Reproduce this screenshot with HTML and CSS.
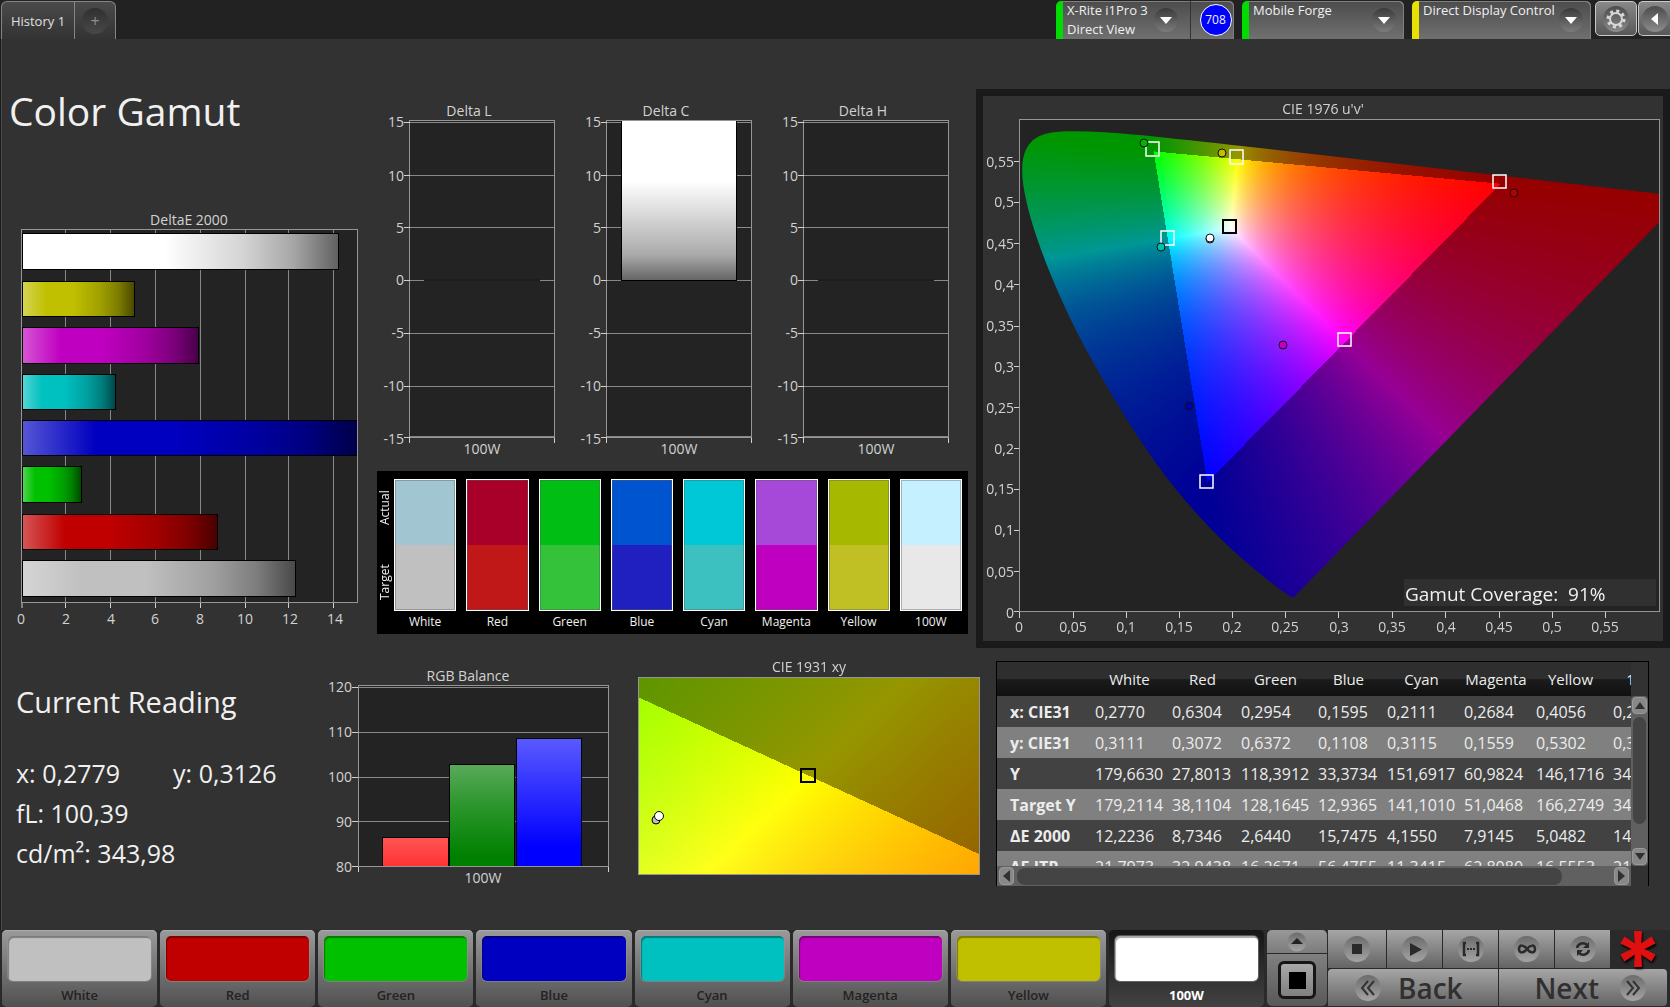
FILE: index.html
```html
<!DOCTYPE html>
<html lang="en">
<head>
<meta charset="utf-8">
<title>Color Gamut</title>
<link rel="stylesheet" href="styles.css">
</head>
<body>
<header class="topbar">
  <nav class="tabs">
    <a class="tab" href="#history">History 1</a>
    <button class="tab tab-add" type="button" aria-label="Add tab"><span>+</span></button>
  </nav>
  <div class="devices">
    <div class="device device-meter ok">
      <button class="device-main" type="button"><span class="device-name">X-Rite i1Pro 3<br>Direct View</span><span class="drop"></span></button>
      <span class="badge-cell"><span class="badge">708</span></span>
    </div>
    <div class="device device-source ok">
      <button class="device-main" type="button"><span class="device-name">Mobile Forge</span><span class="drop"></span></button>
    </div>
    <div class="device device-display warn">
      <button class="device-main" type="button"><span class="device-name">Direct Display Control</span><span class="drop"></span></button>
    </div>
    <button class="tool" type="button" aria-label="Settings">
      <svg width="32" height="32" viewBox="0 0 32 32"><circle cx="16" cy="16" r="13" fill="url(#disc)"/><circle cx="16" cy="16" r="6" fill="none" stroke="#d8d8d8" stroke-width="2"/><circle cx="16" cy="16" r="8" fill="none" stroke="#d8d8d8" stroke-width="3" stroke-dasharray="3 3.283"/></svg>
    </button>
    <button class="tool tool-last" type="button" aria-label="Collapse">
      <svg width="32" height="32" viewBox="0 0 32 32"><circle cx="16" cy="16" r="13" fill="url(#disc)"/><path d="M19 10v12l-7-6z" fill="#fff"/></svg>
    </button>
  </div>
</header>

<svg class="defs" width="0" height="0" aria-hidden="true">
  <defs>
    <linearGradient id="disc" x1="0" y1="0" x2="0" y2="1"><stop offset="0" stop-color="#4c4c4c"/><stop offset="1" stop-color="#8c8c8c"/></linearGradient>
    <linearGradient id="discLight" x1="0" y1="0" x2="0" y2="1"><stop offset="0" stop-color="#6c6c6c"/><stop offset="1" stop-color="#a4a4a4"/></linearGradient>
    <linearGradient id="shade" x1="0" y1="0" x2="1" y2="0">
      <stop offset="0" stop-color="#fff" stop-opacity=".34"/><stop offset=".22" stop-color="#fff" stop-opacity="0"/>
      <stop offset=".45" stop-color="#000" stop-opacity="0"/><stop offset=".7" stop-color="#000" stop-opacity=".17"/>
      <stop offset=".86" stop-color="#000" stop-opacity=".35"/><stop offset="1" stop-color="#000" stop-opacity=".62"/>
    </linearGradient>
    <linearGradient id="fall" x1="0" y1="0" x2="0" y2="1">
      <stop offset="0" stop-color="#fff"/><stop offset=".38" stop-color="#fff"/><stop offset=".84" stop-color="#aaa"/><stop offset="1" stop-color="#646464"/>
    </linearGradient>
    <linearGradient id="gr" x1="0" y1="0" x2="0" y2="1"><stop offset="0" stop-color="#f55"/><stop offset="1" stop-color="#f33"/></linearGradient>
    <linearGradient id="gg" x1="0" y1="0" x2="0" y2="1"><stop offset="0" stop-color="#5aaa5a"/><stop offset=".4" stop-color="#2c962c"/><stop offset=".9" stop-color="#008000"/></linearGradient>
    <linearGradient id="gb" x1="0" y1="0" x2="0" y2="1"><stop offset="0" stop-color="#5a5aff"/><stop offset=".45" stop-color="#2a2aff"/><stop offset=".85" stop-color="#0000ff"/></linearGradient>
  </defs>
</svg>

<main>
  <div class="upper">
    <section class="col-left">
      <h1>Color Gamut</h1>
      <svg class="chart" viewBox="0 210 370 425" role="img" aria-label="DeltaE 2000">
        <text x="189" y="226" class="mid">DeltaE 2000</text>
        <rect x="22" y="230" width="335" height="373" fill="#232323"/>
        <path class="grid" d="M65.500 231V603M110.500 231V603M155.500 231V603M200.500 231V603M245.500 231V603M288.500 231V603M333.500 231V603"/>
        <g class="bars">
          <rect x="22" y="234" width="316" height="36" fill="#fff"/><rect x="22" y="234" width="316" height="36" fill="url(#shade)"/>
          <rect x="22" y="282" width="112" height="35" fill="#c0c000"/><rect x="22" y="282" width="112" height="35" fill="url(#shade)"/>
          <rect x="22" y="328" width="176" height="36" fill="#c000c0"/><rect x="22" y="328" width="176" height="36" fill="url(#shade)"/>
          <rect x="22" y="375" width="93" height="35" fill="#00c0c0"/><rect x="22" y="375" width="93" height="35" fill="url(#shade)"/>
          <rect x="22" y="421" width="335" height="35" fill="#0000c0"/><rect x="22" y="421" width="335" height="35" fill="url(#shade)"/>
          <rect x="22" y="467" width="59" height="36" fill="#00c000"/><rect x="22" y="467" width="59" height="36" fill="url(#shade)"/>
          <rect x="22" y="515" width="195" height="35" fill="#c00000"/><rect x="22" y="515" width="195" height="35" fill="url(#shade)"/>
          <rect x="22" y="561" width="273" height="36" fill="#c0c0c0"/><rect x="22" y="561" width="273" height="36" fill="url(#shade)"/>
        </g>
        <rect x="21.500" y="230.500" width="336" height="373" class="frame"/>
        <path class="tick" d="M22 604v5M65.500 604v5M110.500 604v5M155.500 604v5M200.500 604v5M245.500 604v5M288.500 604v5M333.500 604v5"/>
        <g class="mid"><text x="21" y="625">0</text><text x="66" y="625">2</text><text x="111" y="625">4</text><text x="155" y="625">6</text><text x="200" y="625">8</text><text x="245" y="625">10</text><text x="290" y="625">12</text><text x="335" y="625">14</text></g>
      </svg>
    </section>

    <section class="col-mid">
      <div class="deltas">
        <svg class="chart" viewBox="0 0 197 360" role="img" aria-label="Delta L">
          <text x="92" y="17" class="mid">Delta L</text>
          <rect x="33" y="22" width="144" height="317" fill="#232323"/>
          <path class="grid" d="M33 23.500H177M33 76.500H177M33 128.500H177M33 181.500H47M163 181.500H177M33 234.500H177M33 287.500H177M33 337.500H177"/>
          <path d="M47 181H163" stroke="#181818"/>
          <rect x="32.500" y="21.500" width="145" height="317" class="frame"/>
          <path class="tick" d="M27 23.500h6M27 76.500h6M27 128.500h6M27 181.500h6M27 234.500h6M27 287.500h6M27 338.500h6M32.500 339v5M177.500 339v5"/>
          <g class="end"><text x="27" y="28">15</text><text x="27" y="82">10</text><text x="27" y="134">5</text><text x="27" y="186">0</text><text x="27" y="239">-5</text><text x="27" y="292">-10</text><text x="27" y="345">-15</text></g>
          <text x="105" y="355" class="mid">100W</text>
        </svg>
        <svg class="chart" viewBox="0 0 197 360" role="img" aria-label="Delta C">
          <text x="92" y="17" class="mid">Delta C</text>
          <rect x="33" y="22" width="144" height="317" fill="#232323"/>
          <path class="grid" d="M33 23.500H177M33 76.500H177M33 128.500H177M33 181.500H177M33 234.500H177M33 287.500H177M33 337.500H177"/>
          <rect x="47.500" y="21.500" width="115" height="160" fill="url(#fall)" stroke="#000"/>
          <rect x="32.500" y="21.500" width="145" height="317" class="frame"/>
          <path class="tick" d="M27 23.500h6M27 76.500h6M27 128.500h6M27 181.500h6M27 234.500h6M27 287.500h6M27 338.500h6M32.500 339v5M177.500 339v5"/>
          <g class="end"><text x="27" y="28">15</text><text x="27" y="82">10</text><text x="27" y="134">5</text><text x="27" y="186">0</text><text x="27" y="239">-5</text><text x="27" y="292">-10</text><text x="27" y="345">-15</text></g>
          <text x="105" y="355" class="mid">100W</text>
        </svg>
        <svg class="chart" viewBox="0 0 197 360" role="img" aria-label="Delta H">
          <text x="92" y="17" class="mid">Delta H</text>
          <rect x="33" y="22" width="144" height="317" fill="#232323"/>
          <path class="grid" d="M33 23.500H177M33 76.500H177M33 128.500H177M33 181.500H47M163 181.500H177M33 234.500H177M33 287.500H177M33 337.500H177"/>
          <path d="M47 181H163" stroke="#181818"/>
          <rect x="32.500" y="21.500" width="145" height="317" class="frame"/>
          <path class="tick" d="M27 23.500h6M27 76.500h6M27 128.500h6M27 181.500h6M27 234.500h6M27 287.500h6M27 338.500h6M32.500 339v5M177.500 339v5"/>
          <g class="end"><text x="27" y="28">15</text><text x="27" y="82">10</text><text x="27" y="134">5</text><text x="27" y="186">0</text><text x="27" y="239">-5</text><text x="27" y="292">-10</text><text x="27" y="345">-15</text></g>
          <text x="105" y="355" class="mid">100W</text>
        </svg>
      </div>
      <div class="compare">
        <div class="compare-side"><span>Actual</span><span>Target</span></div>
        <div class="pair"><div class="chips chips-white"></div>White</div>
        <div class="pair"><div class="chips chips-red"></div>Red</div>
        <div class="pair"><div class="chips chips-green"></div>Green</div>
        <div class="pair"><div class="chips chips-blue"></div>Blue</div>
        <div class="pair"><div class="chips chips-cyan"></div>Cyan</div>
        <div class="pair"><div class="chips chips-magenta"></div>Magenta</div>
        <div class="pair"><div class="chips chips-yellow"></div>Yellow</div>
        <div class="pair"><div class="chips chips-100w"></div>100W</div>
      </div>
    </section>

    <section class="gamut stack">
      <canvas id="uv" width="680" height="545"></canvas>
      <svg class="chart" viewBox="983 97 680 545" role="img" aria-label="CIE 1976 u'v'">
        <text x="1323" y="115" class="mid">CIE 1976 u'v'</text>
        <rect x="1019.500" y="120.500" width="640" height="492" class="frame"/>
        <path class="tick" d="M1019.500 613v6M1073.500 613v6M1126.500 613v6M1179.500 613v6M1232.500 613v6M1285.500 613v6M1338.500 613v6M1392.500 613v6M1445.500 613v6M1499.500 613v6M1552.500 613v6M1605.500 613v6M1014 612.500h5M1014 572.500h5M1014 531.500h5M1014 490.500h5M1014 449.500h5M1014 408.500h5M1014 367.500h5M1014 327.500h5M1014 285.500h5M1014 244.500h5M1014 203.500h5M1014 162.500h5"/>
        <g class="mid"><text x="1019" y="633">0</text><text x="1073" y="633">0,05</text><text x="1126" y="633">0,1</text><text x="1179" y="633">0,15</text><text x="1232" y="633">0,2</text><text x="1285" y="633">0,25</text><text x="1339" y="633">0,3</text><text x="1392" y="633">0,35</text><text x="1446" y="633">0,4</text><text x="1499" y="633">0,45</text><text x="1552" y="633">0,5</text><text x="1605" y="633">0,55</text></g>
        <g class="end"><text x="1014" y="619">0</text><text x="1014" y="578">0,05</text><text x="1014" y="536">0,1</text><text x="1014" y="495">0,15</text><text x="1014" y="455">0,2</text><text x="1014" y="414">0,25</text><text x="1014" y="373">0,3</text><text x="1014" y="332">0,35</text><text x="1014" y="291">0,4</text><text x="1014" y="250">0,45</text><text x="1014" y="208">0,5</text><text x="1014" y="168">0,55</text></g>
        <g fill="none" stroke="#fff" stroke-width="1.500">
          <rect x="1146" y="143" width="13" height="14"/><rect x="1230" y="151" width="13" height="14"/><rect x="1493" y="176" width="13" height="13"/><rect x="1161" y="232" width="13" height="14"/><rect x="1338" y="334" width="13" height="13"/><rect x="1200" y="476" width="13" height="13"/>
          <rect x="1223" y="221" width="13" height="13" stroke="#000" stroke-width="2"/>
        </g>
        <g stroke="#111" stroke-width="1">
          <circle cx="1144" cy="144" r="4" fill="#00b400"/><circle cx="1222" cy="154" r="4" fill="#c0c000"/><circle cx="1514" cy="194" r="4" fill="#b80000"/><circle cx="1161" cy="248" r="4" fill="#00c0b0"/><circle cx="1283" cy="346" r="4" fill="#c000c0"/><circle cx="1189" cy="407" r="4" fill="#0000b0"/><circle cx="1210" cy="240" r="4" fill="#c0c0c0"/><circle cx="1210" cy="239" r="4" fill="#fff"/>
        </g>
        <rect x="1404" y="580" width="252" height="27" fill="#303030"/>
        <text x="1405" y="602" class="coverage">Gamut Coverage:&#160; 91%</text>
      </svg>
    </section>
  </div>

  <div class="lower">
    <section class="reading">
      <h2>Current Reading</h2>
      <p class="xy"><span>x: 0,2779</span><span>y: 0,3126</span></p>
      <p>fL: 100,39</p>
      <p>cd/m²: 343,98</p>
    </section>
    <svg class="chart" viewBox="320 662 310 226" role="img" aria-label="RGB Balance">
      <text x="468" y="682" class="mid">RGB Balance</text>
      <rect x="359" y="687" width="249" height="181" fill="#232323"/>
      <path class="grid" d="M359 688.500H608M359 733.500H608M359 778.500H608M359 822.500H608"/>
      <g stroke="#000"><rect x="382.500" y="838.500" width="66" height="29" fill="url(#gr)"/><rect x="449.500" y="765.500" width="65" height="102" fill="url(#gg)"/><rect x="516.500" y="739.500" width="65" height="128" fill="url(#gb)"/></g>
      <rect x="358.500" y="686.500" width="250" height="181" class="frame"/>
      <path class="tick" d="M352 688.500h6M352 733.500h6M352 778.500h6M352 822.500h6M352 867.500h6M358.500 868v5M608.500 868v5"/>
      <g class="end"><text x="352" y="693">120</text><text x="352" y="738">110</text><text x="352" y="783">100</text><text x="352" y="828">90</text><text x="352" y="873">80</text></g>
      <text x="483" y="884" class="mid">100W</text>
    </svg>
    <div class="stack">
      <canvas id="xy" width="355" height="226"></canvas>
      <svg class="chart" viewBox="630 653 355 226" role="img" aria-label="CIE 1931 xy">
        <text x="809" y="673" class="mid">CIE 1931 xy</text>
        <rect x="638.500" y="678.500" width="341" height="197" class="frame"/>
        <rect x="801" y="770" width="14" height="13" fill="none" stroke="#000" stroke-width="2"/>
        <g stroke="#000"><circle cx="656" cy="821" r="4" fill="#c0c0c0"/><circle cx="659" cy="817" r="4.500" fill="#fff"/></g>
      </svg>
    </div>
    <section class="results">
      <div class="view">
        <table>
          <colgroup><col class="c-name"><col class="c-w"><col class="c-r"><col class="c-g"><col class="c-b"><col class="c-c"><col class="c-m"><col class="c-y"><col class="c-h"></colgroup>
          <thead><tr><td></td><th scope="col">White</th><th scope="col">Red</th><th scope="col">Green</th><th scope="col">Blue</th><th scope="col">Cyan</th><th scope="col">Magenta</th><th scope="col">Yellow</th><th scope="col">100W</th></tr></thead>
          <tbody>
            <tr><th scope="row">x: CIE31</th><td>0,2770</td><td>0,6304</td><td>0,2954</td><td>0,1595</td><td>0,2111</td><td>0,2684</td><td>0,4056</td><td>0,2779</td></tr>
            <tr><th scope="row">y: CIE31</th><td>0,3111</td><td>0,3072</td><td>0,6372</td><td>0,1108</td><td>0,3115</td><td>0,1559</td><td>0,5302</td><td>0,3126</td></tr>
            <tr><th scope="row">Y</th><td>179,6630</td><td>27,8013</td><td>118,3912</td><td>33,3734</td><td>151,6917</td><td>60,9824</td><td>146,1716</td><td>343,98</td></tr>
            <tr><th scope="row">Target Y</th><td>179,2114</td><td>38,1104</td><td>128,1645</td><td>12,9365</td><td>141,1010</td><td>51,0468</td><td>166,2749</td><td>343,98</td></tr>
            <tr><th scope="row">ΔE 2000</th><td>12,2236</td><td>8,7346</td><td>2,6440</td><td>15,7475</td><td>4,1550</td><td>7,9145</td><td>5,0482</td><td>14,17</td></tr>
            <tr><th scope="row">ΔE ITP</th><td>21,7973</td><td>32,9438</td><td>16,2671</td><td>56,4755</td><td>11,3415</td><td>62,8080</td><td>16,5553</td><td>21,45</td></tr>
          </tbody>
        </table>
      </div>
      <div class="vbar">
        <button type="button" aria-label="Scroll up"><svg width="10" height="8"><path d="M0 7L5 0L10 7z"/></svg></button>
        <span class="vthumb"></span>
        <button type="button" aria-label="Scroll down"><svg width="10" height="8"><path d="M0 0L5 7L10 0z"/></svg></button>
      </div>
      <div class="hbar">
        <button type="button" aria-label="Scroll left"><svg width="7" height="12"><path d="M7 0L0 6L7 12z"/></svg></button>
        <span class="hthumb"></span>
        <button type="button" aria-label="Scroll right"><svg width="7" height="12"><path d="M0 0L7 6L0 12z"/></svg></button>
      </div>
    </section>
  </div>
</main>

<footer class="dock">
  <div class="patches">
    <button class="patch" type="button"><span class="fill f-white"></span>White</button>
    <button class="patch" type="button"><span class="fill f-red"></span>Red</button>
    <button class="patch" type="button"><span class="fill f-green"></span>Green</button>
    <button class="patch" type="button"><span class="fill f-blue"></span>Blue</button>
    <button class="patch" type="button"><span class="fill f-cyan"></span>Cyan</button>
    <button class="patch" type="button"><span class="fill f-magenta"></span>Magenta</button>
    <button class="patch" type="button"><span class="fill f-yellow"></span>Yellow</button>
    <button class="patch active" type="button"><span class="fill f-100w"></span>100W</button>
  </div>
  <div class="window">
    <button class="window-up" type="button" aria-label="More"><svg width="20" height="20"><circle cx="10" cy="10" r="9.500" fill="url(#discLight)"/><path d="M4 12L10 6L16 12z" fill="#222"/></svg></button>
    <button class="window-full" type="button" aria-label="Pattern window"><span></span></button>
  </div>
  <div class="controls">
    <button type="button" aria-label="Stop"><svg width="28" height="28"><circle cx="14" cy="14" r="13" fill="url(#discLight)"/><path d="M9 9h10v10H9z" fill="#2a2a2a"/></svg></button>
    <button type="button" aria-label="Play"><svg width="28" height="28"><circle cx="14" cy="14" r="13" fill="url(#discLight)"/><path d="M9 8L21 14.500L9 21z" fill="#2a2a2a"/></svg></button>
    <button type="button" aria-label="Step"><svg width="28" height="28"><circle cx="14" cy="14" r="13" fill="url(#discLight)"/><path d="M9 8H7V20H9M19 8H21V20H19" fill="none" stroke="#2a2a2a" stroke-width="2.500"/><path d="M10 14h2M13 14h2M16 14h2" stroke="#2a2a2a" stroke-width="2"/></svg></button>
    <button type="button" aria-label="Continuous"><svg width="28" height="28"><circle cx="14" cy="14" r="13" fill="url(#discLight)"/><path d="M14 14C11 10 6 9 6 14S11 18 14 14S22 9 22 14S17 18 14 14z" fill="none" stroke="#2a2a2a" stroke-width="2.500"/></svg></button>
    <button type="button" aria-label="Repeat"><svg width="28" height="28"><circle cx="14" cy="14" r="13" fill="url(#discLight)"/><path d="M8 13C9 8 15 7 18 10M20 15C19 20 13 21 10 18" fill="none" stroke="#2a2a2a" stroke-width="2.500"/><path d="M20 7V13H14zM8 21V15H14z" fill="#2a2a2a"/></svg></button>
    <svg class="star" width="36" height="40" viewBox="-18 -20 36 40" aria-hidden="true"><g fill="#e01010"><path d="M-4 -18H4L3 0H-3z"/><path d="M-4 -18H4L3 0H-3z" transform="rotate(60)"/><path d="M-4 -18H4L3 0H-3z" transform="rotate(120)"/><path d="M-4 -18H4L3 0H-3z" transform="rotate(180)"/><path d="M-4 -18H4L3 0H-3z" transform="rotate(240)"/><path d="M-4 -18H4L3 0H-3z" transform="rotate(300)"/></g></svg>
    <button class="step back" type="button"><svg width="28" height="28"><circle cx="14" cy="14" r="13" fill="url(#discLight)"/><path d="M14 7L8 14L14 21M20 7L14 14L20 21" fill="none" stroke="#333" stroke-width="2"/></svg>Back</button>
    <button class="step next" type="button">Next<svg width="28" height="28"><circle cx="14" cy="14" r="13" fill="url(#discLight)"/><path d="M8 7L14 14L8 21M14 7L20 14L14 21" fill="none" stroke="#333" stroke-width="2"/></svg></button>
  </div>
</footer>
<script src="gamut.js"></script>
</body>
</html>
```
FILE: styles.css
```css
* { box-sizing: border-box; }
body {
  margin: 0;
  min-height: 100vh;
  display: flex;
  flex-direction: column;
  background: #323232;
  color: #f0f0f0;
  font: 14px/18px "Open Sans", "Noto Sans", sans-serif;
  overflow-x: hidden;
  box-shadow: inset 1px 0 #1c1c1c, inset 2px 0 #484848;
}
button { font: inherit; color: inherit; border: 0; padding: 0; margin: 0; background: none; }
h1, h2, p { margin: 0; font-weight: 400; }
svg { display: block; }
.defs { position: absolute; }

/* Top bar */
.topbar {
  height: 39px;
  background: #222;
  display: flex;
  justify-content: space-between;
  padding-top: 1px;
  padding-left: 1px;
}
.tabs {
  display: flex;
  border: 1px solid #858585;
  border-bottom: 0;
  border-radius: 6px 6px 0 0;
  background: linear-gradient(#4a4a4a, #333);
}
.tab { width: 72px; color: #e0e0e0; text-decoration: none; line-height: 39px; font-size: 13px; text-align: center; }
.tab-add { width: 41px; border-left: 1px solid #858585; display: grid; place-items: center; }
.tab-add span {
  width: 26px; height: 26px; line-height: 26px; border-radius: 13px;
  background: linear-gradient(#303030, #484848); color: #8c8c8c; font-size: 16px;
}
.devices { display: flex; }
.device {
  display: flex;
  margin-right: 8px;
  border-left: 7px solid #00dc00;
  border-radius: 5px 5px 0 0;
  background: linear-gradient(#4c4c4c, #707070);
  box-shadow: inset -1px 1px #808080;
}
.device.warn { border-left-color: #e8e000; margin-right: 4px; }
.device-meter { width: 178px; }
.device-source { width: 162px; }
.device-display { width: 179px; }
.device-main { flex: 1; min-width: 0; display: flex; justify-content: space-between; align-items: flex-start; padding: 0 8px 0 4px; text-align: left; }
.device-meter .device-main { padding-right: 12px; }
.device-name { font-size: 13px; line-height: 19px; white-space: nowrap; min-width: 0; }
.drop {
  width: 24px; height: 24px; border-radius: 12px; margin-top: 7px; flex: none;
  background: linear-gradient(#3a3a3a, #7c7c7c);
  display: grid; place-items: center;
}
.drop::after { content: ""; border: 6px solid transparent; border-top: 7px solid #fff; border-bottom: 0; }
.badge-cell { width: 44px; border-left: 1px solid #333; display: grid; place-items: center; padding-left: 6px; }
.badge {
  width: 32px; height: 32px; line-height: 30px; border-radius: 16px; border: 1px solid #fff;
  background: #0000ff; font-size: 12px; text-align: center;
}
.tool {
  width: 42px; height: 35px; border: 1px solid #c8c8c8; border-radius: 5px; margin-right: 1px;
  background: linear-gradient(#888, #585858); display: grid; place-items: center;
}
.tool-last { width: 32px; margin-right: 0; border-right: 0; border-radius: 5px 0 0 5px; }

/* Charts */
main { flex: 1; padding-top: 50px; }
.chart { width: 100%; height: auto; }
.chart text { fill: #d2d2d2; font-size: 14px; }
.chart .coverage { fill: #f0f0f0; font-size: 19px; }
.mid { text-anchor: middle; }
.end { text-anchor: end; }
.frame { fill: none; stroke: #969696; }
.grid { fill: none; stroke: #888; }
.tick { fill: none; stroke: #d0d0d0; stroke-width: 1; }
.bars { stroke: #000; shape-rendering: crispEdges; }
.stack { display: grid; }
.stack > * { grid-area: 1 / 1; width: 100%; }

.upper { display: grid; grid-template-columns: minmax(0, 370fr) minmax(0, 606fr) minmax(0, 694fr); }
.col-left { display: flex; flex-direction: column; justify-content: space-between; padding-bottom: 14px; }
h1 { font-size: 39px; line-height: 44px; padding-left: 9px; }
.col-mid { padding: 10px 8px 14px 7px; display: flex; flex-direction: column; justify-content: space-between; }
.deltas { display: grid; grid-template-columns: repeat(3, minmax(0, 1fr)); }
.gamut { border: 7px solid #1a1a1a; }

.compare {
  display: grid;
  grid-template-columns: 7px repeat(8, minmax(0, 1fr));
  gap: 10px;
  background: #000;
  padding: 8px 6px 2px 0;
  font-size: 12px;
}
.compare-side { display: flex; flex-direction: column; height: 148px; width: 16px; margin-top: -8px; }
.compare-side span { flex: 1; writing-mode: vertical-rl; transform: rotate(180deg); text-align: center; line-height: 16px; }
.pair { text-align: center; line-height: 21px; }
.chips { height: 132px; border: 1px solid #fff; box-shadow: inset 0 0 0 1px rgba(90, 90, 90, .4); }
.chips-white { background: linear-gradient(#a2c5d2 50%, #c0c0c0 50%); }
.chips-red { background: linear-gradient(#a80028 50%, #c01818 50%); }
.chips-green { background: linear-gradient(#00be14 50%, #34c23a 50%); }
.chips-blue { background: linear-gradient(#0054d0 50%, #2020c0 50%); }
.chips-cyan { background: linear-gradient(#00c8d6 50%, #3cc0c0 50%); }
.chips-magenta { background: linear-gradient(#a648d8 50%, #c000c0 50%); }
.chips-yellow { background: linear-gradient(#a6b800 50%, #c0c024 50%); }
.chips-100w { background: linear-gradient(#c4f0ff 50%, #e8e8e8 50%); }

.lower {
  display: grid;
  grid-template-columns: minmax(0, 320fr) minmax(0, 310fr) minmax(0, 355fr) minmax(0, 685fr);
  align-items: start;
  padding-top: 13px;
}
.lower > .stack { margin-top: -9px; }
.reading { padding: 21px 0 0 16px; font-size: 25px; line-height: 40px; white-space: nowrap; }
.reading h2 { font-size: 29px; line-height: 40px; margin-bottom: 31px; }
.xy { display: flex; gap: 53px; }

/* Results table */
.results {
  margin: 0 21px 0 11px;
  border: 1px solid #000;
  border-bottom: 0;
  display: grid;
  grid-template-columns: minmax(0, 1fr) 17px;
  grid-template-rows: 204px 20px;
}
.view { overflow: hidden; }
table { width: 686px; table-layout: fixed; border-collapse: collapse; font-size: 16px; line-height: 22px; }
.c-name { width: 94px; }
.c-w, .c-g, .c-c, .c-y { width: 77px; }
.c-r { width: 69px; }
.c-b { width: 69px; }
.c-m { width: 72px; }
.c-h { width: 74px; }
td, th { padding: 0 0 0 4px; text-align: left; white-space: nowrap; color: #ececec; }
thead tr { height: 34px; background: linear-gradient(#2e2e2e 50%, #1c1c1c 50%, #101010); }
thead th { font-weight: 400; font-size: 15px; padding: 0; text-align: center; }
tbody tr { height: 31px; background: #424242; }
tbody tr:nth-child(even) { background: #808080; }
tbody th { padding-left: 13px; font-weight: 700; }
.vbar, .hbar { background: #606060; display: flex; justify-content: space-between; align-items: center; }
.vbar { flex-direction: column; margin-top: 34px; padding: 1px 0; border-radius: 4px; }
.vbar button, .hbar button { background: #888; border: 1px solid #999; border-radius: 4px; display: grid; place-items: center; }
.vbar button { width: 15px; height: 17px; }
.hbar button { width: 15px; height: 18px; }
.results path { fill: #303030; }
.vthumb { width: 13px; flex: 1; margin: 3px 0 24px; border-radius: 7px; background: #444; }
.hbar { padding: 0 2px; }
.hthumb { height: 17px; flex: 1; margin: 0 52px 0 3px; border-radius: 8px; background: #444; }

/* Bottom dock */
.dock { display: flex; gap: 3px; height: 77px; padding: 0 3px 1px 2px; background: #2a2a2a; }
.patches { flex: 1; display: grid; grid-template-columns: repeat(8, minmax(0, 1fr)); gap: 3px; }
.patch {
  border-radius: 5px;
  background: linear-gradient(#9a9a9a, #505050);
  box-shadow: inset 0 1px #aaa;
  padding: 6px 6px 0;
  color: #222;
  font-weight: 600;
  font-size: 13px;
  line-height: 24px;
  text-align: center;
}
.patch.active { background: linear-gradient(#161616, #424242); box-shadow: none; color: #fff; font-weight: 700; }
.fill { display: block; height: 45px; border-radius: 5px; box-shadow: inset 1px 2px 1px rgba(0, 0, 0, .35), 0 0 0 1px rgba(150, 150, 150, .5); margin-bottom: 2px; }
.f-white { background: #c0c0c0; }
.f-red { background: #c00000; }
.f-green { background: #00c000; }
.f-blue { background: #0000c0; }
.f-cyan { background: #00c0c0; }
.f-magenta { background: #c000c0; }
.f-yellow { background: #c0c000; }
.f-100w { background: #fff; }
.window { width: 60px; display: flex; flex-direction: column; gap: 1px; }
.window-up { height: 23px; border-radius: 5px 5px 0 0; background: linear-gradient(#999, #7c7c7c); display: grid; place-items: center; }
.window-full { flex: 1; border-radius: 0 0 5px 5px; background: linear-gradient(#808080, #585858); display: grid; place-items: center; }
.window-full span { width: 38px; height: 38px; border: 3px solid #161616; border-radius: 6px; background: linear-gradient(#000, #000) center / 17px 17px no-repeat, linear-gradient(#a8a8a8, #808080); }
.controls {
  width: 339px;
  margin-left: -2px;
  display: grid;
  grid-template-columns: 58px repeat(4, 55px) 1fr;
  grid-template-rows: 38px 37px;
  gap: 1px;
}
.controls button { background: linear-gradient(#a6a6a6, #646464); display: grid; place-items: center; }
.star { place-self: center; margin-right: 2px; filter: drop-shadow(1px 2px 1px #000); }
.controls .step { grid-column: span 3; display: flex; align-items: center; color: #303030; font-size: 28px; font-weight: 600; line-height: 36px; }
.controls .back { padding-left: 26px; gap: 16px; border-radius: 4px 0 0 0; }
.controls .next { justify-content: flex-end; padding-right: 20px; gap: 20px; border-radius: 0 4px 4px 0; }
```
FILE: gamut.js
```js
// Spectral locus in CIE 1976 u'v'.
const LOCUS = [
  [.2569, .0165], [.2557, .0159], [.2347, .0350], [.1877, .0871], [.1441, .1510], [.1147, .2044],
  [.0828, .2708], [.0521, .3427], [.0282, .4117], [.0119, .4699], [.0035, .5131], [.0014, .5432],
  [.0046, .5638], [.0123, .5770], [.0231, .5837], [.0360, .5861], [.0501, .5868], [.0792, .5856],
  [.1127, .5821], [.2026, .5694], [.4035, .5393], [.6234, .5065]
];

// Brightest linear RGB colour of a chromaticity; dimmed outside the Rec. 709 triangle.
function colour(x, y) {
  const X = x / y, Z = (1 - x - y) / y;
  const lin = [
    3.2406 * X - 1.5372 - 0.4986 * Z,
    -0.9689 * X + 1.8758 + 0.0415 * Z,
    0.0557 * X - 0.2040 + 1.0570 * Z
  ];
  const top = Math.max(...lin);
  const gain = Math.min(...lin) < 0 ? 150 : 255;
  return lin.map(c => gain * Math.max(c, 0) / top);
}

function paint(canvas, box, toXY) {
  const ctx = canvas.getContext("2d");
  const img = ctx.createImageData(box.w, box.h);
  for (let j = 0; j < box.h; j++) {
    for (let i = 0; i < box.w; i++) {
      const [x, y] = toXY(i, j);
      const c = y > 0 ? colour(x, y) : [0, 0, 0];
      img.data.set([c[0], c[1], c[2], 255], 4 * (j * box.w + i));
    }
  }
  const layer = document.createElement("canvas");
  layer.width = box.w;
  layer.height = box.h;
  layer.getContext("2d").putImageData(img, 0, 0);
  return [ctx, layer];
}

function drawUV() {
  const box = { x: 37, y: 24, w: 639, h: 491 };
  const su = 1065, sv = 818;
  const [ctx, layer] = paint(document.getElementById("uv"), box, (i, j) => {
    const u = i / su, v = (box.h - j) / sv;
    const d = 6 * u - 16 * v + 12;
    return [9 * u / d, 4 * v / d];
  });
  ctx.fillStyle = "#232323";
  ctx.fillRect(box.x, box.y, box.w, box.h);
  const pts = LOCUS.map(([u, v]) => [box.x + u * su, box.y + box.h - v * sv]);
  ctx.beginPath();
  ctx.moveTo(...pts[0]);
  // Smooth through the midpoints of neighbouring samples.
  for (let k = 1; k < pts.length - 1; k++) {
    const mx = (pts[k][0] + pts[k + 1][0]) / 2, my = (pts[k][1] + pts[k + 1][1]) / 2;
    ctx.quadraticCurveTo(pts[k][0], pts[k][1], mx, my);
  }
  ctx.lineTo(...pts[pts.length - 1]);
  ctx.closePath();
  ctx.clip();
  ctx.drawImage(layer, box.x, box.y);
}

function drawXY() {
  const box = { x: 9, y: 26, w: 340, h: 196 };
  const [ctx, layer] = paint(document.getElementById("xy"), box, (i, j) =>
    [.4193 + (i - 169) / 5400, .5053 - (j - 97) / 3130]);
  ctx.drawImage(layer, box.x, box.y);
}

drawUV();
drawXY();
```
